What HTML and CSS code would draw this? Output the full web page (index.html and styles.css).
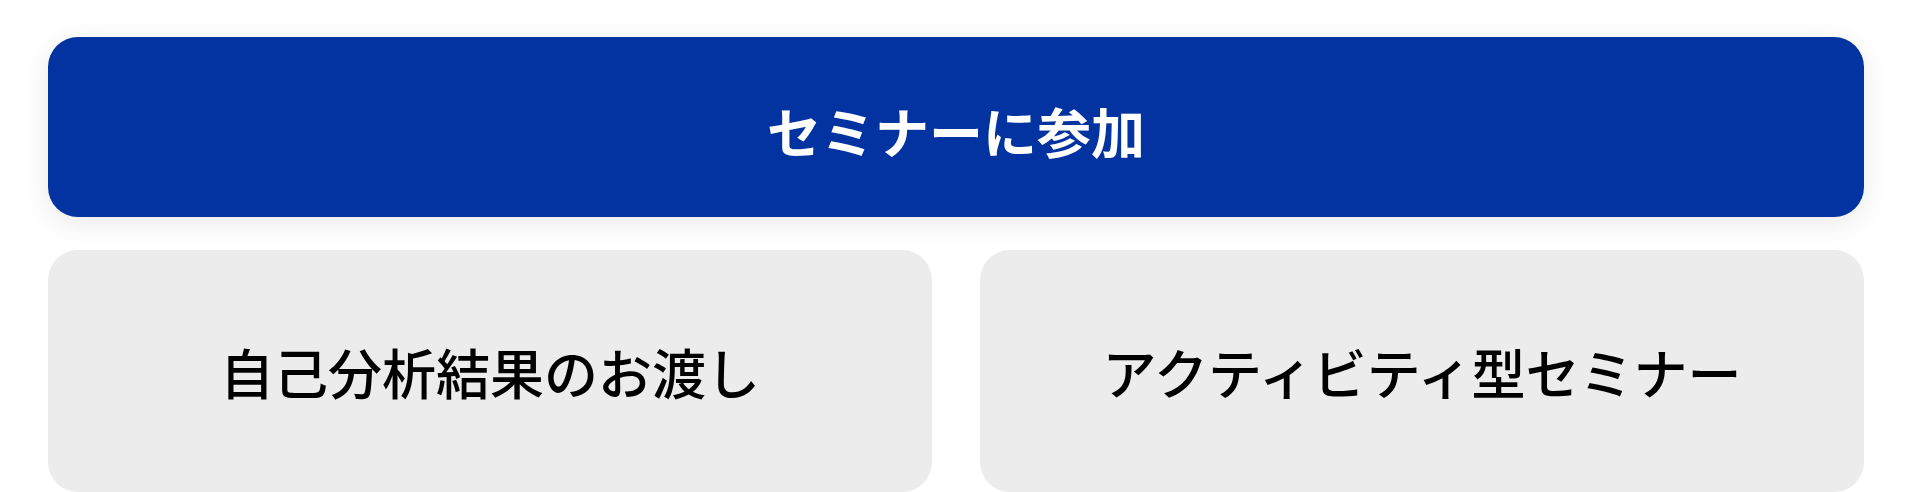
FILE: index.html
```html
<!DOCTYPE html>
<html lang="ja">
<head>
<meta charset="utf-8">
<title>セミナー</title>
<link rel="stylesheet" href="styles.css">
</head>
<body>
<main class="page">
  <button class="primary" type="button">セミナーに参加</button>
  <div class="cards">
    <div class="card">自己分析結果のお渡し</div>
    <div class="card">アクティビティ型セミナー</div>
  </div>
</main>
</body>
</html>
```
FILE: styles.css
```css
html, body {
  margin: 0;
  padding: 0;
  background: #ffffff;
}
body {
  font-family: "Noto Sans CJK JP", "Noto Sans", sans-serif;
}
.page {
  padding: 37px 48px 0;
  display: flex;
  flex-direction: column;
  gap: 33px;
}
.primary {
  height: 180px;
  border: none;
  border-radius: 30px;
  background: #0333a1;
  color: #ffffff;
  font-family: inherit;
  font-size: 54px;
  font-weight: 700;
  box-shadow: 0 6px 28px rgba(0, 0, 0, 0.09);
  display: flex;
  align-items: center;
  justify-content: center;
  padding: 6px 0 0;
}
.cards {
  display: grid;
  grid-template-columns: 1fr 1fr;
  gap: 48px;
}
.card {
  height: 242px;
  border-radius: 30px;
  background: #ececec;
  color: #000000;
  font-size: 54px;
  font-weight: 500;
  display: flex;
  align-items: center;
  justify-content: center;
}
```
